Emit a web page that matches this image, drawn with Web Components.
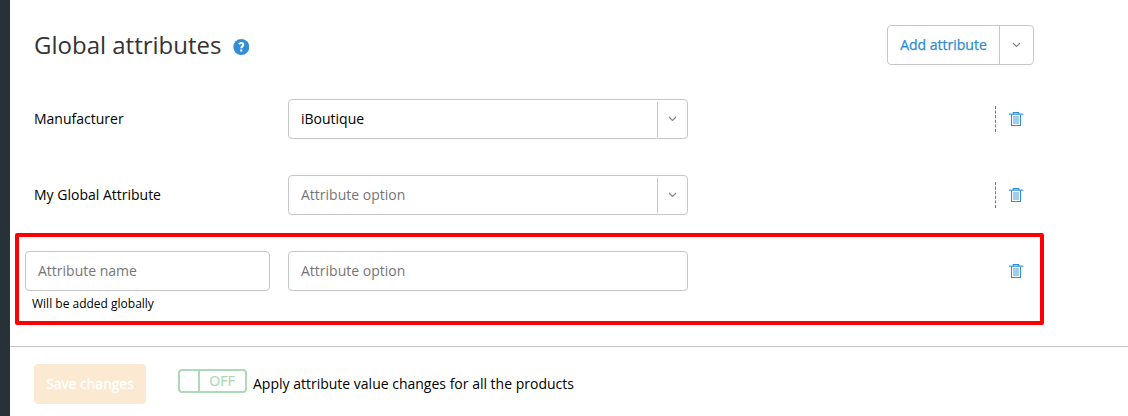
<!DOCTYPE html>
<html lang="en">
<head>
<meta charset="utf-8">
<title>Global attributes</title>
<style>
html,body{margin:0;height:100%}
body{font:14px/20px "Open Sans","Noto Sans",sans-serif;color:#000;background:#fff;overflow:hidden}
</style>
</head>
<body>
<attributes-page>
  <page-header slot="header">Global attributes</page-header>
  <attribute-row><field-label slot="name">Manufacturer</field-label><text-field slot="value" dropdown filled>iBoutique</text-field></attribute-row>
  <attribute-row><field-label slot="name">My Global Attribute</field-label><text-field slot="value" dropdown>Attribute option</text-field></attribute-row>
  <attribute-row highlighted><text-field slot="name">Attribute name</text-field><text-field slot="value">Attribute option</text-field><span slot="note">Will be added globally</span></attribute-row>
  <save-bar slot="footer">Apply attribute value changes for all the products</save-bar>
</attributes-page>
<script>
function define(name, html) {
  customElements.define(name, class extends HTMLElement {
    constructor() {
      super();
      this.attachShadow({mode: 'open'}).innerHTML = html;
    }
  });
}

define('chevron-icon', `
<style>:host{display:block;width:9px;height:6px}svg{display:block}</style>
<svg width="9" height="6" viewBox="0 0 9 6"><path d="M1 1l3.5 3.5L8 1" fill="none" stroke="#858585" stroke-width="1.2"/></svg>`);

define('help-icon', `
<style>:host{display:block;width:16px;height:16px}svg{display:block}</style>
<svg width="16" height="16" viewBox="0 0 16 16"><circle cx="8.3" cy="8" r="8" fill="#338ed6"/><path d="M5.9 5.1C6.5 4.3 7.2 4 8.1 4c1.3 0 2.2.7 2.2 1.8 0 1.5-2 1.5-2 3.5" fill="none" stroke="#fff" stroke-width="2"/><rect x="7.2" y="10.5" width="2.1" height="2" fill="#fff"/></svg>`);

define('trash-icon', `
<style>:host{display:block;width:14px;height:14px}svg{display:block;overflow:visible}</style>
<svg width="14" height="14" viewBox="0 0 14 14" fill="none" stroke="#2f8fd4"><path d="M0 2.2h14.4" stroke-width="1.1"/><path d="M4.2 2V.6h5.6V2" stroke-width="1.1"/><path d="M2.5 2.5v11h9v-11" stroke-width="1.1"/><path d="M5 4v8M7 4v8M9 4v8" stroke-width=".9"/></svg>`);

define('split-button', `
<style>
:host{display:flex;box-sizing:border-box;width:147px;height:40px;border:1px solid #c7c7c7;border-radius:4px;color:#2a8bd2;font-weight:500;-webkit-text-stroke:.25px #2a8bd2}
.label{width:111px;display:flex;align-items:center;justify-content:center;border-right:1px solid #c7c7c7;white-space:nowrap}
.more{flex:1;display:flex;align-items:center;justify-content:center}
</style>
<div class="label"><slot></slot></div><div class="more"><chevron-icon></chevron-icon></div>`);

define('page-header', `
<style>
:host{display:flex;align-items:flex-start;width:1000px;height:74px;margin-left:24px}
h1{margin:4px 12px 0 0;font-size:24px;line-height:32px;font-weight:400;color:#333;white-space:nowrap}
help-icon{margin-top:14px}
split-button{margin-left:auto}
</style>
<h1><slot></slot></h1><help-icon></help-icon><split-button>Add attribute</split-button>`);

define('field-label', `
<style>:host{display:flex;align-items:center;height:40px;padding-left:9px;white-space:nowrap}</style><slot></slot>`);

define('text-field', `
<style>
:host{display:flex;align-items:center;box-sizing:border-box;height:40px;border:1px solid #c7c7c7;border-radius:4px;background:#fff;color:#757575}
:host([filled]){color:#000}
.text{flex:1;padding-left:12px;white-space:nowrap}
.arrow{display:none;width:29px;height:35px;border-left:1px solid #c7c7c7;align-items:center;justify-content:center}
:host([dropdown]) .arrow{display:flex}
</style>
<div class="text"><slot></slot></div><div class="arrow"><chevron-icon></chevron-icon></div>`);

define('attribute-row', `
<style>
:host{display:block;box-sizing:border-box;height:76px;margin-left:15px}
.row{display:grid;grid-template-columns:245px 400px 1fr;column-gap:18px;width:999px}
.actions{display:flex;justify-content:flex-end;align-items:center}
.divider{width:0;height:26px;border-left:1px dashed #777;margin-right:13px}
trash-icon{margin-right:1px}
.note{font-size:12px;line-height:16px;padding:5px 0 0 7px}
:host([highlighted]){width:1029px;height:92px;margin:-18px 0 0 5px;border:4px solid #f00;border-radius:2px;padding:14px 0 0 6px}
:host([highlighted]) .divider,:host(:not([highlighted])) .note{display:none}
</style>
<div class="row"><slot name="name"></slot><slot name="value"></slot><div class="actions"><div class="divider"></div><trash-icon></trash-icon></div></div>
<div class="note"><slot name="note"></slot></div>`);

define('toggle-switch', `
<style>
:host{display:flex;box-sizing:border-box;width:69px;height:24px;border:2px solid #acd9b7;border-radius:4px;color:#acd9b7}
.knob{width:18px;border-right:2px solid #acd9b7}
.state{flex:1;text-align:center;line-height:20px;padding-right:1px;-webkit-text-stroke:.2px #acd9b7}
</style>
<div class="knob"></div><div class="state"><slot></slot></div>`);

define('save-bar', `
<style>
:host{display:flex;align-items:flex-start;box-sizing:border-box;height:70px;border-top:1px solid #c7c7c7;padding:17px 0 0 24px}
.save{width:112px;height:40px;border-radius:4px;background:#fce9d1;color:#fff;font-weight:500;-webkit-text-stroke:.35px #fff;display:flex;align-items:center;justify-content:center;white-space:nowrap}
toggle-switch{margin:5px 6px 0 32px}
.caption{margin-top:10px;white-space:nowrap}
</style>
<div class="save">Save changes</div><toggle-switch>OFF</toggle-switch><div class="caption"><slot></slot></div>`);

define('attributes-page', `
<style>
:host{display:grid;grid-template-columns:10px 1fr;height:416px}
.rail{background:#263238}
main{display:flex;flex-direction:column;padding-top:25px;box-sizing:border-box;height:416px}
.foot{margin-top:auto}
</style>
<div class="rail"></div><main><slot name="header"></slot><slot></slot><div class="foot"><slot name="footer"></slot></div></main>`);
</script>
</body>
</html>
